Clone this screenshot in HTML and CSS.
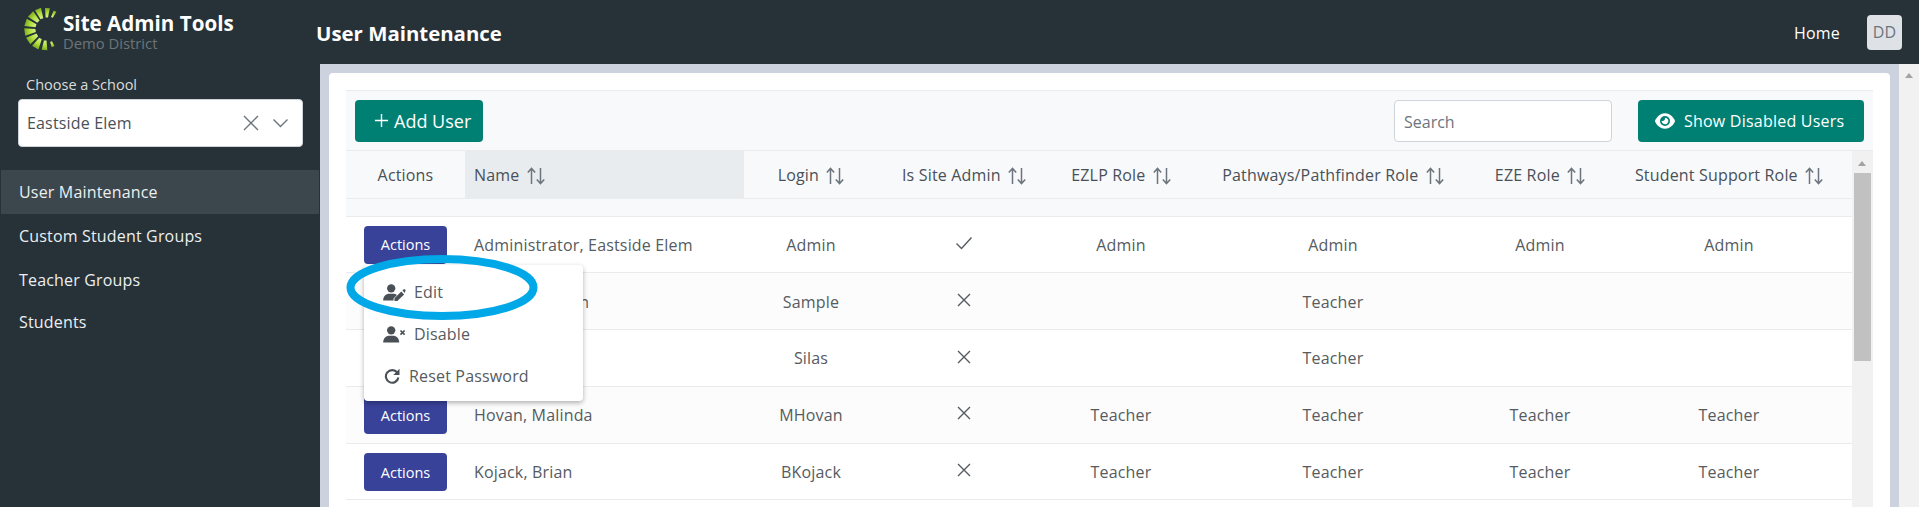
FILE: index.html
```html
<!DOCTYPE html>
<html lang="en">
<head>
<meta charset="utf-8">
<title>User Maintenance</title>
<link rel="stylesheet" href="styles.css">
</head>
<body>
<svg class="defs" width="0" height="0" aria-hidden="true">
  <defs>
    <symbol id="sort" viewBox="0 0 18 18"><path d="M4.500 17V2M.8 5.600 4.500 1.400l3.700 4.200M13.500 1v15M9.800 12.400l3.700 4.200 3.700-4.200" fill="none" stroke="currentColor" stroke-width="1.5"/></symbol>
    <symbol id="check" viewBox="0 0 18 18"><path d="M1.500 9.500 6.500 14.500 16.500 3.500" fill="none" stroke="currentColor" stroke-width="1.4"/></symbol>
    <symbol id="cross" viewBox="0 0 18 18"><path d="M3 3 15 15M15 3 3 15" fill="none" stroke="currentColor" stroke-width="1.4"/></symbol>
  </defs>
</svg>
<div class="app">
  <header class="topbar">
    <div class="brand">
      <svg class="logo" viewBox="-22 -22 44 44" aria-hidden="true">
        <defs><linearGradient id="lime" x1="0" y1="0" x2="0" y2="1"><stop offset="0" stop-color="#7fae24"/><stop offset=".5" stop-color="#b5e23f"/><stop offset="1" stop-color="#d5f08a"/></linearGradient></defs>
        <g fill="url(#lime)">
          <path transform="rotate(27)" d="M-1.500-20 1.500-20 1-13-1-13Z"/>
          <path transform="rotate(4)" d="M-2.400-21 2.400-21 1.200-11.500-1.200-11.500Z"/>
          <path transform="rotate(-22)" d="M-3.200-21.500 3.200-21.500 1.500-11-1.500-11Z"/>
          <path transform="rotate(-46)" d="M-3.800-21.500 3.800-21.500 1.600-10.500-1.600-10.500Z"/>
          <path transform="rotate(-72)" d="M-3.800-21.500 3.800-21.500 1.600-10.500-1.600-10.500Z"/>
          <path transform="rotate(-98)" d="M-3.800-21.500 3.800-21.500 1.600-10.500-1.600-10.500Z"/>
          <path transform="rotate(-124)" d="M-3.800-21.500 3.800-21.500 1.600-10.500-1.600-10.500Z"/>
          <path transform="rotate(-150)" d="M-3.600-21.500 3.600-21.500 1.500-11-1.500-11Z"/>
          <path transform="rotate(-176)" d="M-2.800-21 2.800-21 1.300-11.500-1.300-11.500Z"/>
          <path transform="rotate(158)" d="M-1.500-19 1.500-19 1-13.500-1-13.500Z"/>
        </g>
      </svg>
      <div class="brand-text">
        <div class="brand-name">Site Admin Tools</div>
        <div class="brand-sub">Demo District</div>
      </div>
    </div>
    <h1 class="page-title">User Maintenance</h1>
    <nav class="top-links">
      <a class="home">Home</a>
      <span class="avatar">DD</span>
    </nav>
  </header>

  <aside class="sidebar">
    <label class="school-label">Choose a School</label>
    <div class="school-select">
      <span class="school-value">Eastside Elem</span>
      <svg class="sel-x" viewBox="0 0 16 16" aria-hidden="true"><path d="M1 1 15 15M15 1 1 15" fill="none" stroke="currentColor" stroke-width="1.4"/></svg>
      <svg class="sel-chev" viewBox="0 0 16 10" aria-hidden="true"><path d="M1 1.500 8 8.500 15 1.500" fill="none" stroke="currentColor" stroke-width="1.4"/></svg>
    </div>
    <ul class="side-nav">
      <li class="side-item active">User Maintenance</li>
      <li class="side-item">Custom Student Groups</li>
      <li class="side-item">Teacher Groups</li>
      <li class="side-item last">Students</li>
    </ul>
  </aside>

  <main class="content">
    <section class="card">
      <div class="panel">
        <div class="toolbar">
          <button class="btn btn-add">
            <svg class="plus" viewBox="0 0 16 16" aria-hidden="true"><path d="M8 1v14M1 8h14" fill="none" stroke="currentColor" stroke-width="1.5"/></svg>
            <span>Add User</span>
          </button>
          <input class="search" placeholder="Search">
          <button class="btn btn-show">
            <svg class="eye" viewBox="0 0 576 512" aria-hidden="true"><path fill="currentColor" d="M288 32c-80.8 0-145.5 36.8-192.6 80.6C48.6 156 17.3 208 2.5 243.7c-3.3 7.9-3.3 16.7 0 24.6C17.3 304 48.6 356 95.4 399.4C142.5 443.2 207.2 480 288 480s145.5-36.8 192.6-80.6c46.8-43.5 78.1-95.4 93-131.1c3.3-7.9 3.3-16.7 0-24.6c-14.9-35.7-46.2-87.7-93-131.1C433.5 68.8 368.8 32 288 32zM144 256a144 144 0 1 1 288 0 144 144 0 1 1 -288 0zm144-64c0 35.3-28.7 64-64 64c-7.1 0-13.9-1.2-20.3-3.3c-5.5-1.8-11.9 1.6-11.7 7.4c.3 6.9 1.3 13.8 3.2 20.7c13.7 51.2 66.4 81.6 117.6 67.9s81.6-66.4 67.9-117.6c-11.1-41.5-47.8-69.4-88.6-71.1c-5.8-.2-9.2 6.1-7.4 11.7c2.1 6.4 3.3 13.2 3.3 20.3z"/></svg>
            <span>Show Disabled Users</span>
          </button>
        </div>
        <div class="table-area">
          <table class="users">
            <colgroup>
              <col class="c-act"><col class="c-name"><col class="c-login"><col class="c-admin"><col class="c-ezlp"><col class="c-path"><col class="c-eze"><col class="c-ss">
            </colgroup>
            <thead>
              <tr class="head-row">
                <th>Actions</th>
                <th class="left sorted">Name <svg class="sort"><use href="#sort"/></svg></th>
                <th>Login <svg class="sort"><use href="#sort"/></svg></th>
                <th>Is Site Admin <svg class="sort"><use href="#sort"/></svg></th>
                <th>EZLP Role <svg class="sort"><use href="#sort"/></svg></th>
                <th>Pathways/Pathfinder Role <svg class="sort"><use href="#sort"/></svg></th>
                <th>EZE Role <svg class="sort"><use href="#sort"/></svg></th>
                <th>Student Support Role <svg class="sort"><use href="#sort"/></svg></th>
              </tr>
              <tr class="filter-row"><th colspan="8"></th></tr>
            </thead>
            <tbody>
              <tr>
                <td><button class="btn-act">Actions</button></td>
                <td class="left">Administrator, Eastside Elem</td>
                <td>Admin</td>
                <td><svg class="mark"><use href="#check"/></svg></td>
                <td>Admin</td><td>Admin</td><td>Admin</td><td>Admin</td>
              </tr>
              <tr>
                <td><button class="btn-act">Actions</button></td>
                <td class="left">Sample, Martin</td>
                <td>Sample</td>
                <td><svg class="mark"><use href="#cross"/></svg></td>
                <td></td><td>Teacher</td><td></td><td></td>
              </tr>
              <tr>
                <td><button class="btn-act">Actions</button></td>
                <td class="left">Silas, Mark</td>
                <td>Silas</td>
                <td><svg class="mark"><use href="#cross"/></svg></td>
                <td></td><td>Teacher</td><td></td><td></td>
              </tr>
              <tr>
                <td><button class="btn-act">Actions</button></td>
                <td class="left">Hovan, Malinda</td>
                <td>MHovan</td>
                <td><svg class="mark"><use href="#cross"/></svg></td>
                <td>Teacher</td><td>Teacher</td><td>Teacher</td><td>Teacher</td>
              </tr>
              <tr>
                <td><button class="btn-act">Actions</button></td>
                <td class="left">Kojack, Brian</td>
                <td>BKojack</td>
                <td><svg class="mark"><use href="#cross"/></svg></td>
                <td>Teacher</td><td>Teacher</td><td>Teacher</td><td>Teacher</td>
              </tr>
            </tbody>
          </table>
          <div class="inner-scroll">
            <span class="arrow"></span>
            <span class="thumb"></span>
          </div>

          <div class="menu">
            <div class="menu-item">
              <svg class="mi-user" viewBox="0 0 24 18" aria-hidden="true"><circle cx="8.500" cy="4.600" r="4.400" fill="currentColor"/><path fill="currentColor" d="M0 17.500C0 12.800 3 10.200 6.500 10.200h4c1.600 0 3 .5 4.100 1.400L11 15.300V17.500Z"/><path fill="currentColor" d="M12 18V15.200L19.200 8 22.200 11 15 18ZM20.400 6.900 21.500 5.900C22 5.400 22.800 5.400 23.300 5.900 23.900 6.400 23.900 7.200 23.400 7.700L22.900 9.400Z"/></svg>
              <span>Edit</span>
            </div>
            <div class="menu-item">
              <svg class="mi-user" viewBox="0 0 24 18" aria-hidden="true"><circle cx="8.500" cy="4.600" r="4.400" fill="currentColor"/><path fill="currentColor" d="M0 17.500C0 12.800 3 10.200 6.500 10.200h4c3.500 0 6.500 2.600 6.500 7.300Z"/><path d="M18.300 4.800 22.700 9.200M22.700 4.800 18.300 9.200" fill="none" stroke="currentColor" stroke-width="1.700"/></svg>
              <span>Disable</span>
            </div>
            <div class="menu-item">
              <svg class="mi-reset" viewBox="0 0 16 16" aria-hidden="true"><path d="M13.300 4.700A6.300 6.300 0 1 0 14.400 9.500" fill="none" stroke="currentColor" stroke-width="2.100"/><path fill="currentColor" d="M15.500 .8V7H9.300Z"/></svg>
              <span>Reset Password</span>
            </div>
          </div>
          <svg class="callout" viewBox="0 0 192 65" aria-hidden="true"><ellipse cx="96" cy="32.500" rx="91.500" ry="28.500" fill="none" stroke="#00a8e8" stroke-width="8"/></svg>
        </div>
      </div>
    </section>
  </main>
  <div class="page-scroll"><span class="arrow"></span></div>
</div>
</body>
</html>
```
FILE: styles.css
```css
* { box-sizing: border-box; }
html, body { margin: 0; height: 100%; overflow: hidden; }
body { font-family: "Open Sans", "Noto Sans", "Liberation Sans", sans-serif; font-size: 16px; letter-spacing: .17px; color: #495057; background: #cdd2df; }
.defs { position: absolute; }
.app { display: grid; grid-template-columns: 320px 1fr 20px; grid-template-rows: 64px 1fr; height: 100vh; }

.topbar { grid-column: 1 / 4; display: flex; align-items: center; background: #273238; color: #fff; }
.brand { width: 316px; display: flex; align-items: flex-start; height: 64px; padding: 7px 0 0 24px; }
.logo { width: 44px; height: 44px; flex: none; margin-right: -5px; }
.brand-text { padding-top: 4px; }
.brand-name { font-size: 20.600px; font-weight: 700; line-height: 24px; letter-spacing: 0; white-space: nowrap; }
.brand-sub { font-size: 14.800px; line-height: 17px; letter-spacing: 0; color: #6d7478; white-space: nowrap; }
.page-title { margin: 2px 0 0; font-size: 20.400px; font-weight: 700; line-height: 24px; letter-spacing: 0; }
.top-links { margin-left: auto; display: flex; align-items: center; gap: 27px; padding-right: 17px; }
.home { font-size: 16px; color: #fff; padding-top: 2px; }
.avatar { width: 35px; height: 35px; border-radius: 4px; background: #dee2e6; color: #6c757d; font-size: 16px; display: flex; align-items: center; justify-content: center; }

.sidebar { background: #273238; color: #eceff1; padding: 11px 1px 0 0; }
.school-label { display: block; margin-left: 26px; font-size: 14.500px; line-height: 20px; letter-spacing: 0; color: #dcdcdc; }
.school-select { display: flex; align-items: center; width: 285px; height: 48px; margin: 4px 0 0 18px; padding: 0 13px 0 8px; background: #fff; border: 1px solid #ced4da; border-radius: 4px; color: #495057; }
.school-value { flex: 1; }
.sel-x { width: 16px; height: 16px; color: #6c757d; }
.sel-chev { width: 17px; height: 10px; margin-left: 13px; color: #6c757d; }
.side-nav { list-style: none; margin: 23px 0 0 1px; padding: 0; }
.side-item { height: 44px; padding-left: 18px; line-height: 44px; }
.side-item.active { background: #3c474d; }
.side-item.last { margin-top: -2px; }

.content { padding: 9px 9px 0; min-width: 0; overflow: hidden; background: #cdd2df; }
.card { background: #fff; border-radius: 4px 4px 0 0; padding: 17px 17px 0; height: 100%; }
.panel { height: 100%; }
.toolbar { display: flex; align-items: center; height: 61px; padding: 0 9px; background: #f8f9fa; border-top: 1px solid #e9ecef; border-bottom: 1px solid #e9ecef; }
.btn { height: 42px; border: 0; border-radius: 4px; background: #008073; color: #fff; font: inherit; letter-spacing: .22px; display: inline-flex; align-items: center; }
.btn-add { width: 128px; padding: 0 0 0 19px; gap: 5px; font-size: 18px; letter-spacing: 0; }
.plus { width: 15px; height: 15px; }
.search { width: 218px; height: 42px; margin-left: auto; padding: 2px 9px 0; border: 1px solid #ced4da; border-radius: 4px; font: inherit; color: #495057; background: #fff; }
.search::placeholder { color: #6c757d; opacity: 1; }
.btn-show { width: 226px; margin-left: 26px; padding: 0 0 0 17px; gap: 9px; }
.eye { width: 20px; height: 18px; }

.table-area { position: relative; display: flex; align-items: flex-start; }
.users { width: 1506px; flex: none; table-layout: fixed; border-collapse: collapse; }
.c-act { width: 119px; } .c-name { width: 279px; } .c-login { width: 134px; } .c-admin { width: 172px; }
.c-ezlp { width: 142px; } .c-path { width: 282px; } .c-eze { width: 132px; } .c-ss { width: 246px; }
.head-row th { height: 47px; padding: 2px 0 0; font-weight: 400; color: #495057; background: #f8f9fa; border-bottom: 1px solid #e9ecef; white-space: nowrap; }
.head-row th.sorted { background: #e9ecef; }
.filter-row th { height: 18px; padding: 0; background: #f8f9fa; border-bottom: 1px solid #e9ecef; }
.sort { width: 18px; height: 18px; margin-left: 3px; vertical-align: -4px; color: #6c757d; }
.users .left { text-align: left; padding-left: 9px; }
.users tbody td { height: 56.800px; padding: 1px 0 0; text-align: center; color: #555b61; border-bottom: 1px solid #e9ecef; white-space: nowrap; }
.users tbody td.left { text-align: left; padding-left: 9px; }
.users tbody tr:nth-child(even) td { background: #fcfcfc; }
.btn-act { display: block; width: 83px; height: 38px; margin: 0 0 0 18px; padding: 0; border: 0; border-radius: 4px; background: #384299; color: #fff; font: inherit; font-size: 14.500px; letter-spacing: 0; font-weight: 500; }
.mark { width: 18px; height: 18px; margin-bottom: 5px; vertical-align: middle; color: #555b61; }

.inner-scroll { width: 21px; flex: none; height: 360px; background: #f1f1f1; position: relative; padding: 0 2px; }
.thumb { display: block; height: 188px; margin-top: 22px; background: #c1c1c1; }
.arrow { display: block; width: 0; height: 0; border-left: 4.500px solid transparent; border-right: 4.500px solid transparent; border-bottom: 5px solid #a3a3a3; }
.inner-scroll .arrow { position: absolute; top: 10px; left: 6px; }

.menu { position: absolute; left: 18px; top: 114px; width: 219px; height: 136px; padding: 6px 0; background: #fff; border-radius: 4px; box-shadow: 0 2px 5px rgba(0,0,0,.3); color: #555b61; }
.menu-item { height: 42px; display: flex; align-items: center; padding-left: 19px; gap: 8px; }
.mi-user { width: 23px; height: 17px; color: #4a5056; }
.mi-reset { width: 16px; height: 16px; margin: 0 1px; color: #4a5056; }
.callout { position: absolute; left: 0; top: 104px; width: 192px; height: 65px; }

.page-scroll { background: #f1f1f1; position: relative; }
.page-scroll .arrow { position: absolute; top: 9px; left: 6px; }
```
